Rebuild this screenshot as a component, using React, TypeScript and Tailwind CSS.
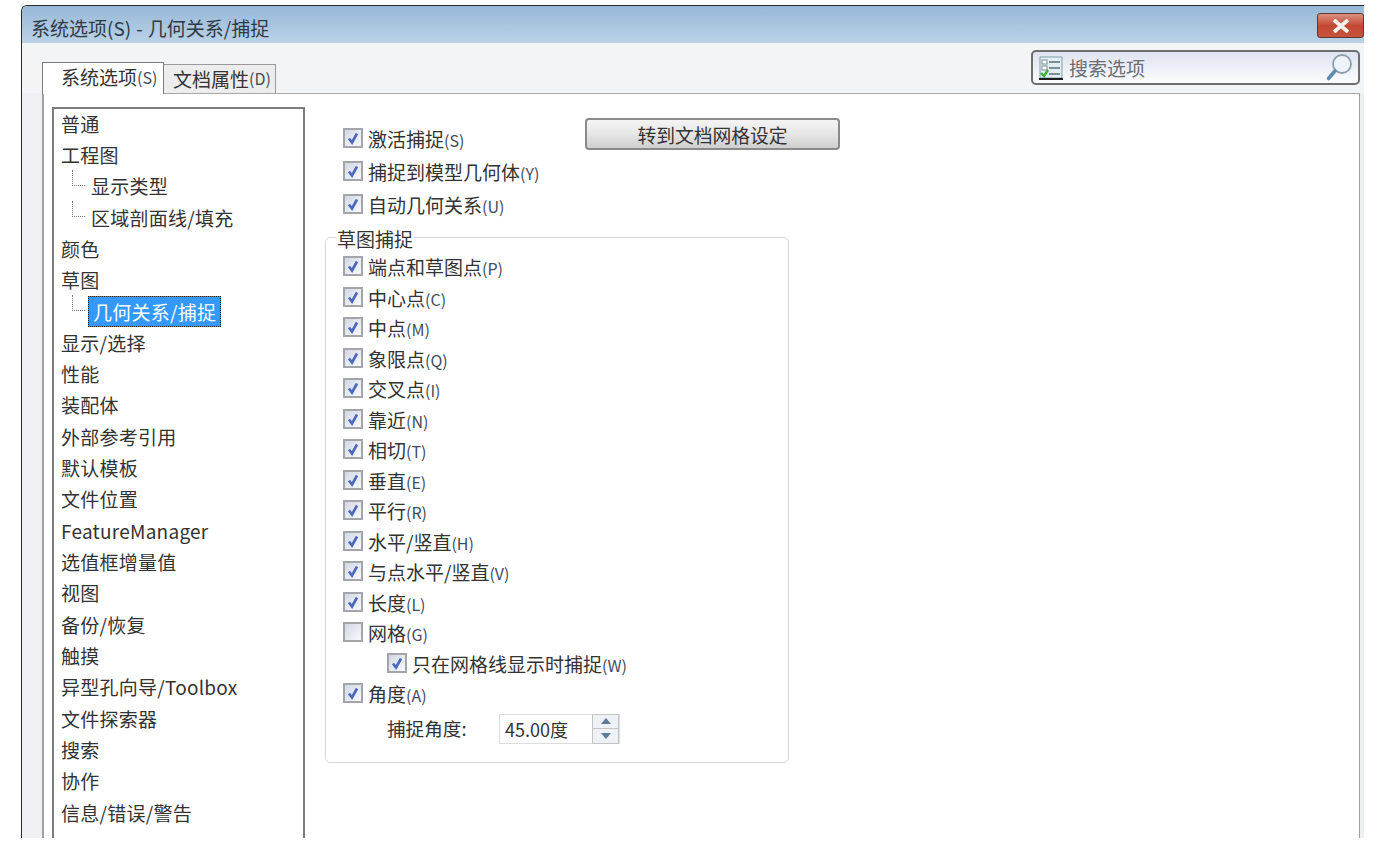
import React from 'react';

const treeItems: { label: string; child?: boolean; selected?: boolean }[] = [
  { label: '普通' },
  { label: '工程图' },
  { label: '显示类型', child: true },
  { label: '区域剖面线/填充', child: true },
  { label: '颜色' },
  { label: '草图' },
  { label: '几何关系/捕捉', child: true, selected: true },
  { label: '显示/选择' },
  { label: '性能' },
  { label: '装配体' },
  { label: '外部参考引用' },
  { label: '默认模板' },
  { label: '文件位置' },
  { label: 'FeatureManager' },
  { label: '选值框增量值' },
  { label: '视图' },
  { label: '备份/恢复' },
  { label: '触摸' },
  { label: '异型孔向导/Toolbox' },
  { label: '文件探索器' },
  { label: '搜索' },
  { label: '协作' },
  { label: '信息/错误/警告' },
];

const snapItems: { label: string; key: string; checked?: boolean; indent?: boolean }[] = [
  { label: '端点和草图点', key: '(P)', checked: true },
  { label: '中心点', key: '(C)', checked: true },
  { label: '中点', key: '(M)', checked: true },
  { label: '象限点', key: '(Q)', checked: true },
  { label: '交叉点', key: '(I)', checked: true },
  { label: '靠近', key: '(N)', checked: true },
  { label: '相切', key: '(T)', checked: true },
  { label: '垂直', key: '(E)', checked: true },
  { label: '平行', key: '(R)', checked: true },
  { label: '水平/竖直', key: '(H)', checked: true },
  { label: '与点水平/竖直', key: '(V)', checked: true },
  { label: '长度', key: '(L)', checked: true },
  { label: '网格', key: '(G)' },
  { label: '只在网格线显示时捕捉', key: '(W)', checked: true, indent: true },
  { label: '角度', key: '(A)', checked: true },
];

function CheckBox({ checked }: { checked?: boolean }) {
  return (
    <span className="w-[20px] h-[20px] shrink-0 border-2 border-[#a3a5a8] bg-gradient-to-br from-[#d3d8e4] to-[#f8f9fb] flex items-center justify-center">
      {checked && (
        <svg width="14" height="14" viewBox="0 0 14 14">
          <path d="M3 7.5 L6 11.5 L11 2.5" fill="none" stroke="#4a68bc" strokeWidth="2.6" />
        </svg>
      )}
    </span>
  );
}

function CheckRow({ label, keyName, checked, h }: { label: string; keyName: string; checked?: boolean; h: string }) {
  return (
    <div className={`flex items-center ${h}`}>
      <CheckBox checked={checked} />
      <span className="ml-[5px] pt-[1px] whitespace-nowrap">
        {label}
        <span className="text-[16px] text-[#3f4c60]">{keyName}</span>
      </span>
    </div>
  );
}

export default function App() {
  return (
    <div
      className="w-[1389px] h-[846px] overflow-hidden bg-white pl-[21px] pr-[25px] pt-[5px] pb-[8px] text-[19px] leading-none text-[#333]"
      style={{ fontFamily: '"Noto Sans CJK SC", sans-serif' }}
    >
      <div className="h-full flex flex-col border-l border-t border-[#2a2a2a] rounded-tl-[6px] overflow-hidden bg-[#eff0f4]">
        {/* Title bar */}
        <div className="h-[37px] shrink-0 flex justify-between bg-gradient-to-b from-[#98b8d6] to-[#b9d2e8] pl-[9px]">
          <span className="pt-[12px] text-[#2f3a45]">
            系统选项(S)<span className="ml-[5px] mr-[5px]">-</span>几何关系/捕捉
          </span>
          <div className="w-[47px] h-[25px] mt-[7px] rounded-[3px] border border-[#5c3a34] bg-gradient-to-b from-[#dc9080] via-[#c24a34] to-[#c8523c] flex items-center justify-center">
            <svg width="20" height="14" viewBox="0 0 20 14">
              <path d="M3 1 L17 13 M17 1 L3 13" stroke="#f6f2ee" strokeWidth="3.8" />
            </svg>
          </div>
        </div>

        {/* Tab strip and search */}
        <div className="h-[50px] shrink-0 flex justify-between pl-[20px] pr-[4px] bg-[#f3f4f6]">
          <div className="flex items-end">
            <div className="w-[122px] h-[32px] -mb-px z-10 border border-b-0 border-[#7d7d7d] bg-white flex items-center pl-[18px] pb-[4px]">
              系统选项<span className="text-[16px] text-[#3f4c60]">(S)</span>
            </div>
            <div className="w-[112px] h-[29px] border border-l-0 border-b-0 border-[#9a9a9a] bg-[#ededed] flex items-center pl-[9px] pb-[2px]">
              文档属性<span className="text-[16px] text-[#3f4c60]">(D)</span>
            </div>
          </div>
          <div className="w-[329px] h-[35px] mt-[7px] rounded-[5px] border-2 border-[#6e6e6e] bg-gradient-to-b from-[#dfe3f0] to-[#fbfcfe] flex items-center pl-[5px] pr-[5px]">
            <svg width="26" height="26" viewBox="0 0 26 26" className="shrink-0">
              <rect x="2" y="2" width="22" height="21" fill="#e4edf3" stroke="#7ea0a8" />
              <rect x="4" y="5" width="5" height="4" fill="#fff" stroke="#7a8f96" />
              <rect x="4" y="11" width="5" height="4" fill="#fff" stroke="#7a8f96" />
              <path d="M11 7 H22 M11 13 H22 M11 19 H22" stroke="#58707a" strokeWidth="1.4" />
              <path d="M3 18 L6 21 L10 15" fill="none" stroke="#35b531" strokeWidth="2.4" />
              <path d="M1 24 H25" stroke="#1c1c1c" strokeWidth="2" />
            </svg>
            <span className="ml-[5px] text-[#6a6f75]">搜索选项</span>
            <svg width="28" height="30" viewBox="0 0 28 30" className="ml-auto shrink-0">
              <circle cx="17" cy="11" r="9" fill="#eef4fa" stroke="#8aa0b0" strokeWidth="1.8" />
              <path d="M10 18 L3.5 25.5" stroke="#5f8db0" strokeWidth="3.6" strokeLinecap="round" />
            </svg>
          </div>
        </div>

        {/* Panel */}
        <div className="flex-1 min-h-0 ml-[20px] mr-[4px] border-l-2 border-t border-r border-t-[#a8a8a8] border-l-[#a0a0a0] border-r-[#a0a0a0] bg-white flex pl-[8px] pt-[13px]">
          <div className="w-[253px] shrink-0 border-l-2 border-t-2 border-r-2 border-[#7c7c7c] pl-[7px] tracking-[0.25px] overflow-hidden">
            <div className="-mt-[1.5px]">
              {treeItems.map((item) => (
                <div key={item.label} className="h-[31.32px] flex items-center">
                  {item.child && (
                    <span className="ml-[11px] w-[13px] h-[16px] border-l border-b border-dotted border-[#777] self-start" />
                  )}
                  <span
                    className={
                      item.selected
                        ? 'ml-[3px] h-[31px] px-[5px] shrink-0 flex items-center bg-[#3399ff] text-white outline-1 -outline-offset-1 outline-dotted outline-[#222]'
                        : item.child
                          ? 'ml-[6px]'
                          : ''
                    }
                  >
                    {item.label}
                  </span>
                </div>
              ))}
            </div>
          </div>

          <div className="pl-[20px] pt-[14px]">
            <div className="flex pl-[18px]">
              <div className="w-[242px]">
                <CheckRow label="激活捕捉" keyName="(S)" checked h="h-[33px]" />
                <CheckRow label="捕捉到模型几何体" keyName="(Y)" checked h="h-[33px]" />
                <CheckRow label="自动几何关系" keyName="(U)" checked h="h-[33px]" />
              </div>
              <div className="w-[255px] h-[32px] -mt-[3px] rounded-[4px] border-2 border-[#8a8a8a] bg-gradient-to-b from-[#f4f4f4] via-[#e6e6e6] to-[#cfcfcf] flex items-center justify-center pt-[2px] text-[18.8px]">
                转到文档网格设定
              </div>
            </div>

            <fieldset className="w-[464px] h-[538px] mt-[5px] border border-[#d4d6d8] rounded-[5px] pl-[17px]">
              <legend className="-ml-[7px] px-[1px] h-[24px] flex items-center pt-[3px]">草图捕捉</legend>
              <div className="pt-[2px]">
                {snapItems.map((s) => (
                  <div key={s.key} className={s.indent ? 'pl-[44px]' : ''}>
                    <CheckRow label={s.label} keyName={s.key} checked={s.checked} h="h-[30.5px]" />
                  </div>
                ))}
                <div className="flex items-center h-[30px] pl-[44px] mt-[5px]">
                  <span className="w-[112px] shrink-0 text-[18.6px]">捕捉角度:</span>
                  <div className="w-[121px] h-[30px] border border-[#dcdcdc] bg-white flex items-center pl-[5px]">
                    <span className="text-[18px]">45.00度</span>
                    <div className="ml-auto w-[27px] h-[30px] border border-[#c4c4c4] bg-[#eef1f6] flex flex-col">
                      <div className="flex-1 flex items-center justify-center border-b border-[#c4c4c4]">
                        <svg width="10" height="6" viewBox="0 0 10 6"><path d="M5 0 L10 6 H0 Z" fill="#5b7a9c" /></svg>
                      </div>
                      <div className="flex-1 flex items-center justify-center">
                        <svg width="10" height="6" viewBox="0 0 10 6"><path d="M5 6 L10 0 H0 Z" fill="#5b7a9c" /></svg>
                      </div>
                    </div>
                  </div>
                </div>
              </div>
            </fieldset>
          </div>
        </div>
      </div>
    </div>
  );
}
